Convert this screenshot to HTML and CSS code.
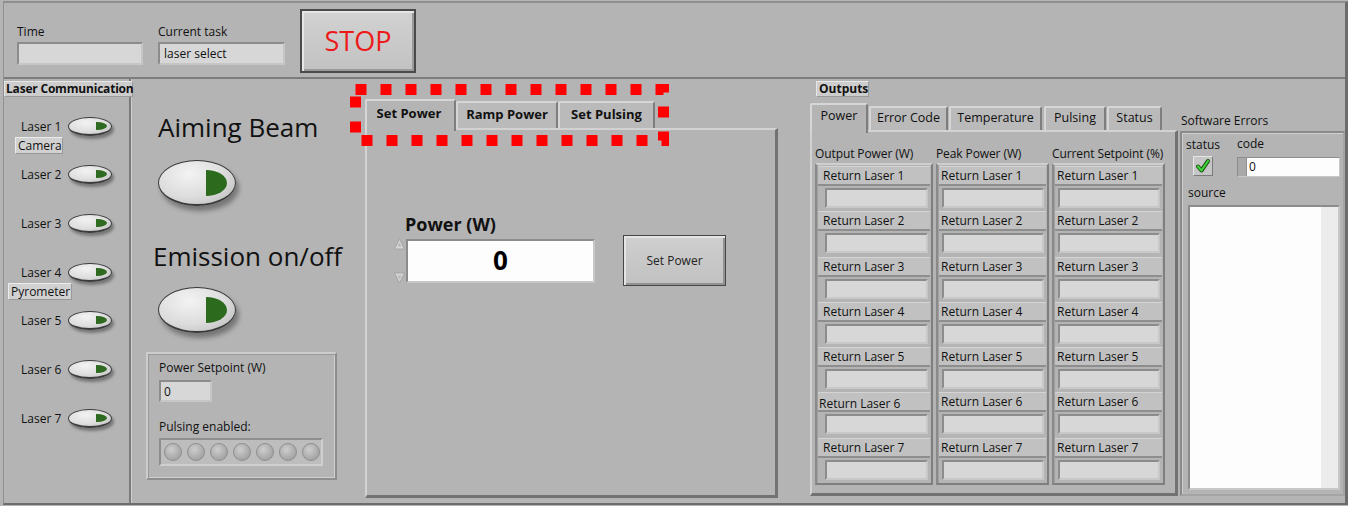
FILE: index.html
```html
<!DOCTYPE html>
<html>
<head>
<meta charset="utf-8">
<title>Laser control panel</title>
<link rel="stylesheet" href="styles.css">
</head>
<body>
<div class="app">
  <div class="top">
    <div class="fg">
      <div class="lbl">Time</div>
      <div class="ind w126"></div>
    </div>
    <div class="fg">
      <div class="lbl">Current task</div>
      <div class="ind w127">laser select</div>
    </div>
    <button class="stop">STOP</button>
  </div>

  <div class="main">
    <div class="lc">
      <div class="lc-title">Laser Communication</div>
      <div class="lc-list">
        <div class="lrow"><div class="lline"><span class="lname">Laser 1</span><span class="sw"></span></div><span class="tag tag-cam">Camera</span></div>
        <div class="lrow"><div class="lline"><span class="lname">Laser 2</span><span class="sw"></span></div></div>
        <div class="lrow"><div class="lline"><span class="lname">Laser 3</span><span class="sw"></span></div></div>
        <div class="lrow"><div class="lline"><span class="lname">Laser 4</span><span class="sw"></span></div><span class="tag tag-pyr">Pyrometer</span></div>
        <div class="lrow"><div class="lline"><span class="lname">Laser 5</span><span class="sw"></span></div></div>
        <div class="lrow"><div class="lline"><span class="lname">Laser 6</span><span class="sw"></span></div></div>
        <div class="lrow"><div class="lline"><span class="lname">Laser 7</span><span class="sw"></span></div></div>
      </div>
    </div>

    <div class="center">
      <div class="cl">
        <div class="big-lbl">Aiming Beam</div>
        <div class="swb"></div>
        <div class="big-lbl em">Emission on/off</div>
        <div class="swb swb2"></div>
        <div class="cluster">
          <div class="lbl cl-l1">Power Setpoint (W)</div>
          <div class="ind sp">0</div>
          <div class="lbl cl-l2">Pulsing enabled:</div>
          <div class="leds">
            <span class="led"></span><span class="led"></span><span class="led"></span><span class="led"></span><span class="led"></span><span class="led"></span><span class="led"></span>
          </div>
        </div>
      </div>

      <div class="tc1">
        <div class="tabstrip">
          <div class="tab sel">Set Power</div>
          <div class="tab t-ramp">Ramp Power</div>
          <div class="tab t-puls">Set Pulsing</div>
        </div>
        <div class="tpanel">
          <div class="numgroup">
            <div class="plbl">Power (W)</div>
            <div class="numrow">
              <div class="incdec">
                <svg width="13" height="48" viewBox="0 0 13 48">
                  <path d="M1.5 12 L6.5 2 L11.5 12 Z" fill="#d6d6d6" stroke="#a4a4a4" stroke-width="1" stroke-linejoin="round"/>
                  <path d="M4.5 9.5 L6.5 5.5 L8.5 9.5 Z" fill="#b8b8b8"/>
                  <path d="M1.5 36 L6.5 46 L11.5 36 Z" fill="#d6d6d6" stroke="#a4a4a4" stroke-width="1" stroke-linejoin="round"/>
                  <path d="M4.5 38.5 L6.5 42.5 L8.5 38.5 Z" fill="#b8b8b8"/>
                </svg>
              </div>
              <div class="num">0</div>
            </div>
          </div>
          <button class="btn-sp">Set Power</button>
        </div>
        <svg class="annot" width="320" height="63" viewBox="0 0 320 63">
          <rect x="5.5" y="5.5" width="308" height="51" fill="none" stroke="#ff0000" stroke-width="11" stroke-dasharray="11 14"/>
        </svg>
      </div>
    </div>

    <div class="out">
      <div class="out-title">Outputs</div>
      <div class="tabstrip2">
        <div class="tab2 sel w58">Power</div>
        <div class="tab2 w79">Error Code</div>
        <div class="tab2 w93">Temperature</div>
        <div class="tab2 w62">Pulsing</div>
        <div class="tab2 w55">Status</div>
      </div>
      <div class="tpanel2">
        <div class="cols">
          <div class="colh">Output Power (W)</div>
          <div class="colh">Peak Power (W)</div>
          <div class="colh">Current Setpoint (%)</div>

          <div class="col c1">
            <div class="rrow"><div class="band">Return Laser 1</div><div class="rbox"></div></div>
            <div class="rrow"><div class="band">Return Laser 2</div><div class="rbox"></div></div>
            <div class="rrow"><div class="band">Return Laser 3</div><div class="rbox"></div></div>
            <div class="rrow"><div class="band">Return Laser 4</div><div class="rbox"></div></div>
            <div class="rrow"><div class="band">Return Laser 5</div><div class="rbox"></div></div>
            <div class="rrow"><div class="band shift">Return Laser 6</div><div class="rbox"></div></div>
            <div class="rrow"><div class="band">Return Laser 7</div><div class="rbox"></div></div>
          </div>
          <div class="col">
            <div class="rrow"><div class="band">Return Laser 1</div><div class="rbox"></div></div>
            <div class="rrow"><div class="band">Return Laser 2</div><div class="rbox"></div></div>
            <div class="rrow"><div class="band">Return Laser 3</div><div class="rbox"></div></div>
            <div class="rrow"><div class="band">Return Laser 4</div><div class="rbox"></div></div>
            <div class="rrow"><div class="band">Return Laser 5</div><div class="rbox"></div></div>
            <div class="rrow"><div class="band">Return Laser 6</div><div class="rbox"></div></div>
            <div class="rrow"><div class="band">Return Laser 7</div><div class="rbox"></div></div>
          </div>
          <div class="col">
            <div class="rrow"><div class="band">Return Laser 1</div><div class="rbox"></div></div>
            <div class="rrow"><div class="band">Return Laser 2</div><div class="rbox"></div></div>
            <div class="rrow"><div class="band">Return Laser 3</div><div class="rbox"></div></div>
            <div class="rrow"><div class="band">Return Laser 4</div><div class="rbox"></div></div>
            <div class="rrow"><div class="band">Return Laser 5</div><div class="rbox"></div></div>
            <div class="rrow"><div class="band">Return Laser 6</div><div class="rbox"></div></div>
            <div class="rrow"><div class="band">Return Laser 7</div><div class="rbox"></div></div>
          </div>
        </div>
      </div>
    </div>

    <div class="swe">
      <div class="swe-title">Software Errors</div>
      <div class="swe-box">
        <div class="swe-top">
          <div class="st">
            <div class="lbl">status</div>
            <div class="chk">
              <svg width="16" height="16" viewBox="0 0 16 16">
                <path d="M3 8.5 L6.5 12.5 L13 3" fill="none" stroke="#1d4d12" stroke-width="4" stroke-linecap="round" stroke-linejoin="round"/>
                <path d="M3 8.5 L6.5 12.5 L13 3" fill="none" stroke="#3fd43a" stroke-width="2.2" stroke-linecap="round" stroke-linejoin="round"/>
              </svg>
            </div>
          </div>
          <div class="cd">
            <div class="lbl">code</div>
            <div class="codef"><span class="cinc"></span><span class="cval">0</span></div>
          </div>
        </div>
        <div class="lbl src-l">source</div>
        <div class="src"><div class="src-scroll"></div></div>
      </div>
    </div>
  </div>
</div>
</body>
</html>
```

FILE: styles.css
```css
* { box-sizing: border-box; }
html, body { margin: 0; padding: 0; }
body {
  background: #b4b4b4;
  font-family: "Open Sans", "Noto Sans", sans-serif;
  font-size: 12px;
  color: #111;
  width: 1348px;
  height: 506px;
  overflow: hidden;
}
button { font-family: inherit; padding: 0; cursor: default; }

.app {
  margin: 1px 0 0 3px;
  width: 1345px;
  height: 504px;
  border-top: 2px solid #8e8e8e;
  border-left: 1px solid #909090;
  border-right: 3px solid #6c6c6c;
  border-bottom: 2px solid #6c6c6c;
  display: flex;
  flex-direction: column;
}

/* ---------- top bar ---------- */
.top {
  height: 76px;
  flex: none;
  border-bottom: 2px solid #7c7c7c;
  display: flex;
  align-items: flex-start;
  padding-left: 13px;
}
.fg { margin-top: 21px; }
.fg + .fg { margin-left: 15px; }
.lbl { height: 16px; line-height: 16px; white-space: nowrap; }
.ind {
  background: #d7d7d7;
  border: 2px solid;
  border-color: #8c8c8c #c6c6c6 #c6c6c6 #8c8c8c;
  height: 22px;
  line-height: 19px;
  padding-left: 4px;
  white-space: nowrap;
}
.fg .ind { margin-top: 2px; height: 23px; }
.w126 { width: 126px; }
.w127 { width: 127px; }
.stop {
  margin: 6px 0 0 15px;
  width: 116px;
  height: 64px;
  background: linear-gradient(#d2d2d2, #c2c2c2);
  border: 2px solid #4a4a4a;
  box-shadow: inset 2px 2px 0 #e6e6e6, inset -2px -2px 0 #9a9a9a;
  color: #ee1a1a;
  font-size: 27px;
  line-height: 56px;
}

/* ---------- main ---------- */
.main { flex: 1; display: flex; min-height: 0; }

/* laser communication */
.lc {
  width: 127px;
  flex: none;
  border-right: 2px solid #7a7a7a;
  box-shadow: 1px 0 0 #cfcfcf;
}
.lc-title {
  margin-top: 2px;
  width: 129px;
  height: 16px;
  line-height: 14px;
  background: #cdcdcd;
  border: 1px solid;
  border-color: #e6e6e6 #9a9a9a #9a9a9a #e6e6e6;
  font-weight: 700;
  padding-left: 1px;
  letter-spacing: -0.2px;
  white-space: nowrap;
  position: relative;
  z-index: 2;
}
.lc-list { padding-top: 18px; }
.lrow { height: 48.7px; }
.lline { height: 22px; display: flex; align-items: center; }
.lname { margin-left: 17px; width: 47px; white-space: nowrap; }
.sw {
  position: relative;
  width: 44px;
  height: 19px;
  border-radius: 50%;
  border: 1px solid #3c3c3c;
  border-bottom-width: 2px;
  background: radial-gradient(ellipse at 40% 30%, #f2f2f2 0%, #dedede 55%, #b9b9b9 100%);
  box-shadow: 2px 3px 3px rgba(0, 0, 0, 0.35);
}
.sw::after {
  content: "";
  position: absolute;
  right: 4px;
  top: 4px;
  width: 11px;
  height: 8px;
  background: #2e6a1f;
  border-radius: 0 90% 90% 0 / 0 50% 50% 0;
}
.tag {
  display: inline-block;
  height: 17px;
  line-height: 15px;
  background: #d1d1d1;
  border: 1px solid;
  border-color: #ececec #989898 #989898 #ececec;
  padding: 0 2px;
  margin-top: -1px;
}
.tag-cam { margin-left: 11px; width: 48px; }
.tag-pyr { margin-left: 4px; width: 64px; }

/* center */
.center {
  width: 677px;
  flex: none;
  display: flex;
  align-items: flex-start;
}
.cl { margin-left: 15px; width: 191px; flex: none; }
.big-lbl {
  margin-top: 32px;
  margin-left: 12px;
  font-size: 26px;
  line-height: 32px;
  height: 32px;
  white-space: nowrap;
  color: #111;
}
.big-lbl.em { margin-top: 34px; margin-left: 7px; }
.swb {
  position: relative;
  margin: 17px 0 0 12px;
  width: 78px;
  height: 46px;
  border-radius: 50%;
  border: 1px solid #3a3a3a;
  border-bottom-width: 2px;
  background: radial-gradient(ellipse at 40% 30%, #f3f3f3 0%, #dcdcdc 55%, #b5b5b5 100%);
  box-shadow: 3px 5px 5px rgba(0, 0, 0, 0.35);
}
.swb::after {
  content: "";
  position: absolute;
  right: 8px;
  top: 9px;
  width: 21px;
  height: 26px;
  background: #2c6a1d;
  border-radius: 0 100% 100% 0 / 0 50% 50% 0;
}
.swb2 { margin-top: 15px; }
.cluster {
  margin-top: 19px;
  width: 191px;
  height: 128px;
  border: 2px solid;
  border-color: #cdcdcd #8e8e8e #8e8e8e #cdcdcd;
  box-shadow: inset 1px 1px 0 #9a9a9a, inset -1px -1px 0 #cfcfcf;
}
.cl-l1 { margin: 6px 0 0 11px; }
.ind.sp { margin: 4px 0 0 11px; width: 53px; height: 22px; padding-left: 3px; }
.cl-l2 { margin: 17px 0 0 11px; }
.leds {
  margin: 3px 0 0 11px;
  width: 164px;
  height: 28px;
  border: 2px solid;
  border-color: #8e8e8e #cfcfcf #cfcfcf #8e8e8e;
  background: #bdbdbd;
  display: flex;
  align-items: center;
  gap: 5px;
  padding-left: 3px;
}
.led {
  width: 18px;
  height: 18px;
  border-radius: 50%;
  border: 1px solid #8f8f8f;
  background: radial-gradient(circle at 40% 35%, #cdcdcd, #a3a3a3 75%, #949494);
}

/* tab control (center) */
.tc1 {
  position: relative;
  margin: 20px 0 0 28px;
  width: 413px;
  flex: none;
}
.tabstrip { height: 29px; display: flex; align-items: flex-end; }
.tab {
  height: 27px;
  line-height: 23px;
  text-align: center;
  font-weight: 700;
  font-size: 13px;
  background: #bababa;
  border: 2px solid;
  border-bottom: none;
  border-color: #d6d6d6 #7e7e7e #7e7e7e #d6d6d6;
  border-radius: 2px 2px 0 0;
  white-space: nowrap;
}
.tab.sel {
  width: 91px;
  height: 32px;
  margin-bottom: -3px;
  line-height: 18px;
  padding-top: 3px;
  padding-right: 3px;
  background: #b4b4b4;
  position: relative;
  z-index: 2;
}
.t-ramp { width: 102px; }
.t-puls { width: 97px; }
.tpanel {
  position: relative;
  z-index: 1;
  height: 370px;
  border-style: solid;
  border-width: 2px 3px 3px 2px;
  border-color: #d2d2d2 #727272 #727272 #d2d2d2;
  display: flex;
  align-items: flex-start;
}
.numgroup { margin: 83px 0 0 26px; }
.plbl {
  margin-left: 12px;
  height: 22px;
  line-height: 22px;
  font-size: 18px;
  font-weight: 700;
  color: #111;
}
.numrow { margin-top: 4px; display: flex; }
.incdec { width: 13px; height: 44px; margin-top: -2px; }
.incdec svg { display: block; }
.num {
  width: 189px;
  height: 44px;
  background: #fdfdfd;
  border: 2px solid;
  border-color: #8c8c8c #c8c8c8 #c8c8c8 #8c8c8c;
  text-align: center;
  font-size: 26px;
  font-weight: 700;
  line-height: 38px;
  color: #000;
}
.btn-sp {
  margin: 105px 0 0 28px;
  width: 103px;
  height: 51px;
  background: linear-gradient(#cfcfcf, #c1c1c1);
  border: 1px solid #474747;
  box-shadow: inset 2px 2px 0 #e4e4e4, inset -2px -2px 0 #929292;
  font-size: 12px;
  color: #222;
}
.annot {
  position: absolute;
  left: -15px;
  top: -15px;
  z-index: 5;
}

/* outputs */
.out { margin-left: 2px; width: 370px; flex: none; }
.out-title {
  margin: 2px 0 0 6px;
  width: 53px;
  height: 16px;
  line-height: 14px;
  background: #cdcdcd;
  border: 1px solid;
  border-color: #e6e6e6 #9a9a9a #9a9a9a #e6e6e6;
  font-weight: 700;
  padding-left: 2px;
}
.tabstrip2 {
  margin-top: 6px;
  height: 27px;
  display: flex;
  align-items: flex-end;
  gap: 1px;
}
.tab2 {
  height: 24px;
  line-height: 20px;
  text-align: center;
  font-size: 12.5px;
  background: #bababa;
  border: 2px solid;
  border-bottom: none;
  border-color: #d6d6d6 #7e7e7e #7e7e7e #d6d6d6;
  border-radius: 2px 2px 0 0;
  white-space: nowrap;
}
.tab2.sel {
  height: 30px;
  margin-bottom: -3px;
  line-height: 18px;
  padding-top: 2px;
  background: #b4b4b4;
  position: relative;
  z-index: 2;
}
.w58 { width: 58px; }
.w79 { width: 79px; }
.w93 { width: 93px; }
.w62 { width: 62px; margin-left: 1px; }
.w55 { width: 55px; }
.tpanel2 {
  position: relative;
  z-index: 1;
  width: 368px;
  height: 366px;
  border-style: solid;
  border-width: 2px 3px 3px 2px;
  border-color: #d2d2d2 #727272 #727272 #d2d2d2;
}
.cols {
  padding: 14px 0 0 3px;
  display: grid;
  grid-template-columns: 118px 113px 113px;
  column-gap: 3px;
}
.colh { height: 16px; line-height: 16px; white-space: nowrap; letter-spacing: -0.1px; }
.col {
  margin-top: 1px;
  height: 322px;
  border: 2px solid;
  border-color: #cfcfcf #7f7f7f #7f7f7f #8a8a8a;
  box-shadow: inset 1px 0 0 #a0a0a0;
  padding-top: 1px;
}
.rrow { height: 45.3px; }
.band {
  margin: 0 1px;
  height: 20px;
  line-height: 18px;
  background: #c1c1c1;
  border-top: 1px solid #d4d4d4;
  border-bottom: 2px solid #8e8e8e;
  padding-left: 2px;
  white-space: nowrap;
}
.c1 .band { padding-left: 5px; }
.c1 .band.shift { padding-left: 1px; line-height: 22px; }
.rbox {
  margin: 2px 3px 0 4px;
  height: 20px;
  background: #d7d7d7;
  border: 2px solid;
  border-color: #8c8c8c #c8c8c8 #c8c8c8 #8c8c8c;
}
.c1 .rbox { margin-left: 8px; }

/* software errors */
.swe { width: 165px; flex: none; }
.swe-title { margin-top: 34px; padding-left: 1px; height: 16px; line-height: 16px; }
.swe-box {
  margin-top: 2px;
  height: 365px;
  border: 2px solid;
  border-color: #8a8a8a #a4a4a4 #a4a4a4 #8a8a8a;
  box-shadow: inset 1px 1px 0 #cfcfcf;
}
.swe-top { display: flex; }
.st { margin-left: 4px; width: 51px; }
.st .lbl { margin-top: 4px; }
.chk {
  margin: 3px 0 0 7px;
  width: 20px;
  height: 20px;
  background: #c6c6c6;
  border: 1px solid;
  border-color: #e6e6e6 #7a7a7a #7a7a7a #e6e6e6;
  display: flex;
  align-items: center;
  justify-content: center;
}
.chk svg { display: block; }
.cd .lbl { margin-top: 3px; }
.codef {
  margin-top: 5px;
  width: 103px;
  height: 20px;
  background: #fdfdfd;
  border: 1px solid;
  border-color: #8c8c8c #c8c8c8 #c8c8c8 #8c8c8c;
  display: flex;
  line-height: 18px;
}
.cinc { width: 9px; background: #a9a9a9; border-right: 1px solid #8e8e8e; }
.cval { padding-left: 2px; }
.src-l { margin: 8px 0 0 6px; }
.src {
  margin: 4px 0 0 6px;
  width: 152px;
  height: 285px;
  background: #fdfdfd;
  border: 2px solid;
  border-color: #8c8c8c #c8c8c8 #c8c8c8 #8c8c8c;
  display: flex;
  justify-content: flex-end;
}
.src-scroll { width: 17px; background: #ececec; }
```
